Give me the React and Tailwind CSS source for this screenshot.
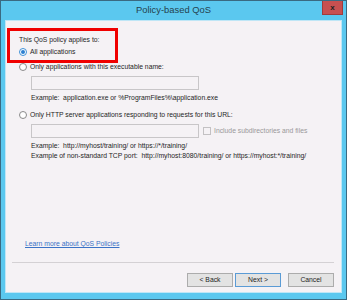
import React from "react";

const font = { fontFamily: '"Liberation Sans", Arial, sans-serif' };

function Radio({ checked }) {
  return (
    <span
      className={
        "relative flex items-center justify-center w-[8px] h-[8px] rounded-full border bg-white " +
        (checked ? "border-[#3d8fd6]" : "border-[#8a8a8a]")
      }
    >
      {checked && <span className="w-[4px] h-[4px] rounded-full bg-[#2b7fd0]" />}
    </span>
  );
}

function Button({ children, primary }) {
  return (
    <div
      className={
        "flex items-center justify-center w-[46px] h-[14px] bg-[#e3e3e3] border text-[6.8px] text-[#1e1e1e] " +
        (primary ? "border-[#5b9bd5]" : "border-[#acacac]")
      }
    >
      {children}
    </div>
  );
}

export default function App() {
  return (
    <div
      className="flex flex-col w-[347px] h-[300px] bg-[#5bc8ef] border border-[#3a6a82]"
      style={font}
    >
      {/* barre de titre */}
      <div className="relative flex items-center justify-center h-[19px] shrink-0">
        <span className="text-[9.4px] text-[#26434f]">Policy-based QoS</span>
        <div className="absolute top-0 right-[3px] flex items-center justify-center w-[21px] h-[14px] bg-[#c75050] border border-[#a03c3c] border-t-0">
          <span className="text-[8px] font-bold text-[#222] leading-none">x</span>
        </div>
      </div>

      {/* contenu */}
      <div className="relative flex flex-col flex-1 mx-[4px] mb-[6px] bg-[#f5f2f5] border border-[#bfe6f6] pl-[13px] text-[6.8px] text-[#1e1e1e]">
        {/* cadre rouge d'annotation */}
        <div className="absolute left-[1px] top-[7px] w-[111px] h-[35px] border-[3px] border-[#f00000]" />

        <div className="flex items-center h-[12px] mt-[13px]">This QoS policy applies to:</div>
        <div className="flex items-center gap-[3px] h-[12px]">
          <Radio checked />
          <span>All applications</span>
        </div>

        <div className="flex items-center gap-[3px] h-[12px] mt-[3px]">
          <Radio />
          <span>Only applications with this executable name:</span>
        </div>
        <div className="ml-[12px] mt-[3px] w-[168px] h-[14px] bg-[#f5f2f5] border border-[#c8c6c8]" />
        <div className="flex items-center h-[12px] mt-[2px] ml-[12px]">
          Example:&nbsp; application.exe or %ProgramFiles%\application.exe
        </div>

        <div className="flex items-center gap-[3px] h-[12px] mt-[5px]">
          <Radio />
          <span>Only HTTP server applications responding to requests for this URL:</span>
        </div>
        <div className="flex items-center ml-[12px] mt-[3px] h-[14px]">
          <div className="w-[168px] h-[14px] bg-[#f5f2f5] border border-[#c8c6c8]" />
          <span className="ml-[4px] w-[8px] h-[8px] bg-[#f5f2f5] border border-[#c3c1c3]" />
          <span className="ml-[3px] text-[#9a989a]">Include subdirectories and files</span>
        </div>
        <div className="flex flex-col ml-[12px] mt-[3px]">
          <div className="flex items-center h-[10px]">
            Example:&nbsp; http://myhost/training/ or https://*/training/
          </div>
          <div className="flex items-center h-[10px]">
            Example of non-standard TCP port:&nbsp; http://myhost:8080/training/ or https://myhost:*/training/
          </div>
        </div>

        <div className="flex-1" />

        <div className="flex items-center h-[12px] ml-[6px]">
          <span className="underline text-[#3b73c6]">Learn more about QoS Policies</span>
        </div>
        <div className="h-[1px] mt-[12px] mr-[7px] -ml-[7px] bg-[#d4d1d4]" />
        <div className="flex justify-end gap-[2px] mt-[10px] mb-[5px] mr-[7px]">
          <Button>&lt; Back</Button>
          <Button primary>Next &gt;</Button>
          <div className="ml-[5px]">
            <Button>Cancel</Button>
          </div>
        </div>
      </div>
    </div>
  );
}
